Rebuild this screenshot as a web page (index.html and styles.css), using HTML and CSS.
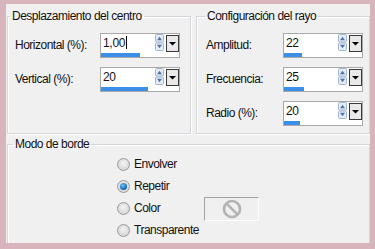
FILE: index.html
```html
<!DOCTYPE html>
<html lang="es">
<head>
<meta charset="utf-8">
<link rel="stylesheet" href="styles.css">
</head>
<body>
<div class="frame">
  <div class="panel">
    <div class="top">
      <fieldset class="group g1">
        <legend class="lg1">Desplazamiento del centro</legend>
        <div class="rows">
          <div class="row">
            <span class="lbl">Horizontal (%):</span>
            <div class="num">
              <div class="numtop">
                <span class="val">1,00<i class="caret"></i></span>
                <svg class="arrows" width="9" height="17" viewBox="0 0 9 17"><rect x="0.5" y="0.5" width="8" height="7.5" rx="1" fill="#e4ecf6" stroke="#a3b6cf"/><rect x="0.5" y="9" width="8" height="7.5" rx="1" fill="#e4ecf6" stroke="#a3b6cf"/><path d="M2 6.2 L4.5 2.8 L7 6.2Z" fill="#4e72a8"/><path d="M2 10.8 L4.5 14.2 L7 10.8Z" fill="#4e72a8"/></svg>
                <svg class="drop" width="13" height="17" viewBox="0 0 13 17"><rect x="0.5" y="0.5" width="12" height="16" fill="#e9e9e9" stroke="#3a3a3a"/><path d="M3 7 L10 7 L6.5 10.5Z" fill="#000"/></svg>
              </div>
              <span class="bar" style="width:39px"></span>
            </div>
          </div>
          <div class="row">
            <span class="lbl">Vertical (%):</span>
            <div class="num">
              <div class="numtop">
                <span class="val">20</span>
                <svg class="arrows" width="9" height="17" viewBox="0 0 9 17"><rect x="0.5" y="0.5" width="8" height="7.5" rx="1" fill="#e4ecf6" stroke="#a3b6cf"/><rect x="0.5" y="9" width="8" height="7.5" rx="1" fill="#e4ecf6" stroke="#a3b6cf"/><path d="M2 6.2 L4.5 2.8 L7 6.2Z" fill="#4e72a8"/><path d="M2 10.8 L4.5 14.2 L7 10.8Z" fill="#4e72a8"/></svg>
                <svg class="drop" width="13" height="17" viewBox="0 0 13 17"><rect x="0.5" y="0.5" width="12" height="16" fill="#e9e9e9" stroke="#3a3a3a"/><path d="M3 7 L10 7 L6.5 10.5Z" fill="#000"/></svg>
              </div>
              <span class="bar" style="width:47px"></span>
            </div>
          </div>
        </div>
      </fieldset>
      <fieldset class="group g2">
        <legend class="lg2">Configuración del rayo</legend>
        <div class="rows">
          <div class="row">
            <span class="lbl">Amplitud:</span>
            <div class="num">
              <div class="numtop">
                <span class="val">22</span>
                <svg class="arrows" width="9" height="17" viewBox="0 0 9 17"><rect x="0.5" y="0.5" width="8" height="7.5" rx="1" fill="#e4ecf6" stroke="#a3b6cf"/><rect x="0.5" y="9" width="8" height="7.5" rx="1" fill="#e4ecf6" stroke="#a3b6cf"/><path d="M2 6.2 L4.5 2.8 L7 6.2Z" fill="#4e72a8"/><path d="M2 10.8 L4.5 14.2 L7 10.8Z" fill="#4e72a8"/></svg>
                <svg class="drop" width="13" height="17" viewBox="0 0 13 17"><rect x="0.5" y="0.5" width="12" height="16" fill="#e9e9e9" stroke="#3a3a3a"/><path d="M3 7 L10 7 L6.5 10.5Z" fill="#000"/></svg>
              </div>
              <span class="bar" style="width:18px"></span>
            </div>
          </div>
          <div class="row">
            <span class="lbl">Frecuencia:</span>
            <div class="num">
              <div class="numtop">
                <span class="val">25</span>
                <svg class="arrows" width="9" height="17" viewBox="0 0 9 17"><rect x="0.5" y="0.5" width="8" height="7.5" rx="1" fill="#e4ecf6" stroke="#a3b6cf"/><rect x="0.5" y="9" width="8" height="7.5" rx="1" fill="#e4ecf6" stroke="#a3b6cf"/><path d="M2 6.2 L4.5 2.8 L7 6.2Z" fill="#4e72a8"/><path d="M2 10.8 L4.5 14.2 L7 10.8Z" fill="#4e72a8"/></svg>
                <svg class="drop" width="13" height="17" viewBox="0 0 13 17"><rect x="0.5" y="0.5" width="12" height="16" fill="#e9e9e9" stroke="#3a3a3a"/><path d="M3 7 L10 7 L6.5 10.5Z" fill="#000"/></svg>
              </div>
              <span class="bar" style="width:20px"></span>
            </div>
          </div>
          <div class="row">
            <span class="lbl">Radio (%):</span>
            <div class="num">
              <div class="numtop">
                <span class="val">20</span>
                <svg class="arrows" width="9" height="17" viewBox="0 0 9 17"><rect x="0.5" y="0.5" width="8" height="7.5" rx="1" fill="#e4ecf6" stroke="#a3b6cf"/><rect x="0.5" y="9" width="8" height="7.5" rx="1" fill="#e4ecf6" stroke="#a3b6cf"/><path d="M2 6.2 L4.5 2.8 L7 6.2Z" fill="#4e72a8"/><path d="M2 10.8 L4.5 14.2 L7 10.8Z" fill="#4e72a8"/></svg>
                <svg class="drop" width="13" height="17" viewBox="0 0 13 17"><rect x="0.5" y="0.5" width="12" height="16" fill="#e9e9e9" stroke="#3a3a3a"/><path d="M3 7 L10 7 L6.5 10.5Z" fill="#000"/></svg>
              </div>
              <span class="bar" style="width:16px"></span>
            </div>
          </div>
        </div>
      </fieldset>
    </div>
    <fieldset class="group g3">
      <legend class="lg3">Modo de borde</legend>
      <div class="radios">
        <div class="opt"><span class="radio"></span><span>Envolver</span></div>
        <div></div>
        <div class="opt"><span class="radio on"></span><span>Repetir</span></div>
        <div></div>
        <div class="opt"><span class="radio"></span><span>Color</span></div>
        <div class="swatch">
          <svg width="22" height="22" viewBox="0 0 22 22"><circle cx="11" cy="11" r="8" fill="none" stroke="#b3b3b3" stroke-width="2.6"/><path d="M5.6 5.6 L16.4 16.4" stroke="#b3b3b3" stroke-width="2.6"/></svg>
        </div>
        <div class="opt"><span class="radio"></span><span>Transparente</span></div>
        <div></div>
      </div>
    </fieldset>
  </div>
</div>
</body>
</html>
```

FILE: styles.css
```css
* { box-sizing: border-box; }
html, body { margin: 0; padding: 0; }
body {
  background: #d8b4bc;
  font-family: "Liberation Sans", Arial, sans-serif;
  font-size: 12px;
  letter-spacing: -0.5px;
  color: #111;
}
.frame {
  width: 375px;
  height: 249px;
  padding: 4px 5px 6px 6px;
  background: #d8b4bc;
}
.panel {
  width: 364px;
  height: 239px;
  background: #f0f0f0;
  overflow: hidden;
  padding: 5px 0 0 1px;
}
.top {
  display: flex;
  gap: 5px;
}
.group {
  margin: 0;
  padding: 0;
  border: 1px solid #d3d6da;
  box-shadow: inset 1px 1px 0 #fff, 1px 1px 0 #fff;
  min-width: 0;
}
legend {
  line-height: 14px;
  padding: 0 2px;
  white-space: nowrap;
}
.lg1 { margin-left: 2px; }
.lg2 { margin-left: 8px; }
.lg3 { margin-left: 5px; }
.g1 { width: 184px; height: 125px; }
.g2 { width: 174px; height: 125px; }
.g3 {
  margin-top: 3px;
  width: 363px;
  height: 130px;
}
.rows {
  display: flex;
  flex-direction: column;
  gap: 9px;
  padding-top: 10px;
}
.g1 .rows { padding-left: 7px; }
.g2 .rows { padding-left: 9px; }
.row {
  display: flex;
  align-items: center;
  height: 25px;
}
.lbl {
  white-space: nowrap;
  margin-top: -2px;
}
.g1 .lbl { width: 85px; }
.g2 .lbl { width: 77px; }
.num {
  width: 80px;
  height: 25px;
  border: 1px solid #a9a9a9;
  background: #fff;
  display: flex;
  flex-direction: column;
}
.numtop {
  height: 19px;
  display: flex;
  align-items: flex-start;
}
.val {
  flex: 1;
  padding: 3px 0 0 2px;
  font-size: 12px;
  line-height: 12px;
  display: flex;
  align-items: flex-start;
  letter-spacing: -0.3px;
}
.caret {
  display: block;
  width: 1px;
  height: 13px;
  background: #000;
  margin-left: 1px;
  margin-top: -1px;
}
.arrows { display: block; margin-top: 0; }
.drop { display: block; margin: 1px 0 0 2px; }
.bar {
  display: block;
  height: 4px;
  background: #3c8fe8;
}
.radios {
  display: grid;
  grid-template-columns: 87px 55px;
  grid-auto-rows: 22px;
  padding: 2px 0 0 109px;
}
.opt {
  display: flex;
  align-items: center;
  gap: 4px;
  white-space: nowrap;
}
.radio {
  width: 13px;
  height: 13px;
  border-radius: 50%;
  border: 1px solid #9a9a9a;
  background: radial-gradient(circle at 50% 40%, #f4f4f4 0, #dcdcdc 60%, #cfcfcf 100%);
  flex: none;
  display: flex;
  align-items: center;
  justify-content: center;
}
.radio.on::after {
  content: "";
  width: 7px;
  height: 7px;
  border-radius: 50%;
  background: radial-gradient(circle at 40% 35%, #7cc4ff 0, #1a73c9 55%, #0b4f93 100%);
}
.swatch {
  width: 55px;
  height: 24px;
  border-style: solid;
  border-width: 1px;
  border-color: #a2a2a2 #fdfdfd #fdfdfd #a2a2a2;
  display: flex;
  align-items: center;
  justify-content: center;
}
.swatch svg { display: block; }
```
